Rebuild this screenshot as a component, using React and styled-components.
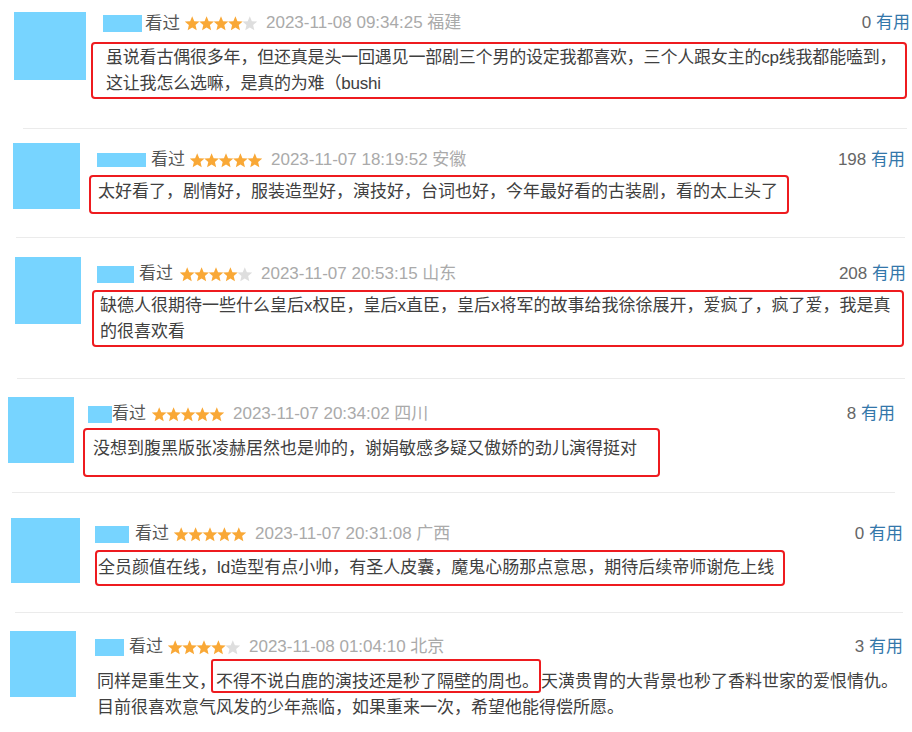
import React from 'react';
import styled, { createGlobalStyle } from 'styled-components';

const GlobalStyle = createGlobalStyle`
  html, body { margin: 0; padding: 0; background: #fff; }
  body { font-family: "Liberation Sans", "Noto Sans CJK SC", sans-serif; }
`;

const Page = styled.div`
  width: 912px;
  height: 732px;
  overflow: hidden;
  background: #fff;
`;

const Item = styled.div`
  display: flex;
  align-items: flex-start;
  box-sizing: border-box;
  height: ${({ $h }) => $h}px;
  padding-left: ${({ $x }) => $x}px;
  padding-right: ${({ $right }) => 912 - $right}px;
  font-size: ${({ $fs }) => $fs}px;
`;

const Avatar = styled.div`
  flex-shrink: 0;
  width: ${({ $w }) => $w}px;
  height: ${({ $h }) => $h}px;
  margin-top: ${({ $top }) => $top}px;
  background: #77d4ff;
`;

const Main = styled.div`
  flex: 1;
  min-width: 0;
  margin-left: ${({ $gap }) => $gap}px;
  padding-top: ${({ $top }) => $top}px;
`;

const Head = styled.div`
  display: flex;
  align-items: center;
  height: 26px;
  line-height: 26px;
  padding-left: ${({ $indent }) => $indent}px;
  white-space: nowrap;
`;

const NameBar = styled.span`
  width: ${({ $w }) => $w}px;
  height: ${({ $h }) => $h}px;
  margin-right: ${({ $gap }) => $gap}px;
  background: #77d4ff;
`;

const Watched = styled.span`
  color: #555;
`;

const StarRow = styled.svg`
  margin: 0 9px 0 ${({ $gap }) => $gap}px;
  flex-shrink: 0;
`;

const DateText = styled.span`
  color: #aaa;
  font-size: 17px;
`;

const Useful = styled.span`
  margin-left: auto;
  color: #666;
  font-size: 17px;
`;

const UsefulLink = styled.span`
  color: #3377aa;
`;

const Body = styled.div`
  margin-top: ${({ $top }) => $top}px;
  font-size: 17px;
  line-height: 26px;
  letter-spacing: ${({ $ls = 0 }) => $ls}px;
  color: #404040;
  white-space: nowrap;
  padding-left: ${({ $pl }) => $pl}px;
`;

const BoxedBody = styled(Body)`
  width: ${({ $w }) => $w}px;
  box-sizing: border-box;
  border: 2px solid #ee1b1f;
  border-radius: 4px;
  padding-top: ${({ $pt }) => $pt}px;
  padding-bottom: ${({ $pb }) => $pb}px;
`;

const Mark = styled.span`
  border: 2px solid #ee1b1f;
  border-radius: 3px;
  padding: 11px 0 0 3px;
  margin-left: -5px;
`;

const Divider = styled.div`
  height: 1px;
  background: #ebebeb;
  margin: 0 ${({ $r }) => 912 - $r}px 0 ${({ $l }) => $l}px;
`;

const starPoints = (cx, cy, R, r) => {
  const pts = [];
  for (let i = 0; i < 10; i++) {
    const a = -Math.PI / 2 + (i * Math.PI) / 5;
    const rad = i % 2 === 0 ? R : r;
    pts.push(`${(cx + rad * Math.cos(a)).toFixed(2)},${(cy + rad * Math.sin(a)).toFixed(2)}`);
  }
  return pts.join(' ');
};

const Stars = ({ count, gap }) => (
  <StarRow $gap={gap} width="72" height="15" viewBox="0 0 72 15">
    {[0, 1, 2, 3, 4].map((i) => (
      <polygon
        key={i}
        points={starPoints(i * 14.4 + 7.2, 8, 7.7, 3.5)}
        fill={i < count ? '#f9a836' : '#dedede'}
      />
    ))}
  </StarRow>
);

const reviews = [
  {
    h: 128, x: 14, avT: 12, avW: 72, avH: 68, cx: 91, right: 910, fs: 17.5,
    nameDx: 12, nameW: 39, nameH: 17, nameGap: 3, starGap: 5, headTop: 10,
    stars: 4, date: '2023-11-08 09:34:25 福建', useful: 0,
    bodyTop: 6, box: { w: 816, pt: 1, pb: 0 }, pl: 13, ls: -0.2,
    lines: [
      '虽说看古偶很多年，但还真是头一回遇见一部剧三个男的设定我都喜欢，三个人跟女主的cp线我都能嗑到，',
      '这让我怎么选嘛，是真的为难（bushi',
    ],
    divider: { l: 23, r: 907 },
  },
  {
    h: 108, x: 13, avT: 14, avW: 67, avH: 66, cx: 89, right: 905, fs: 17,
    nameDx: 8, nameW: 49, nameH: 14, nameGap: 5, starGap: 5, headTop: 18,
    stars: 5, date: '2023-11-07 18:19:52 安徽', useful: 198,
    bodyTop: 2, box: { w: 700, pt: 2, pb: 7 }, pl: 7,
    lines: ['太好看了，剧情好，服装造型好，演技好，台词也好，今年最好看的古装剧，看的太上头了'],
    divider: { l: 16, r: 905 },
  },
  {
    h: 140, x: 15, avT: 19, avW: 66, avH: 67, cx: 92, right: 906, fs: 17,
    nameDx: 5, nameW: 37, nameH: 17, nameGap: 5, starGap: 7, headTop: 23,
    stars: 4, date: '2023-11-07 20:53:15 山东', useful: 208,
    bodyTop: 3, box: { w: 812, pt: 1, pb: 0 }, pl: 6,
    lines: [
      '缺德人很期待一些什么皇后x权臣，皇后x直臣，皇后x将军的故事给我徐徐展开，爱疯了，疯了爱，我是真',
      '的很喜欢看',
    ],
    divider: { l: 17, r: 905 },
  },
  {
    h: 113, x: 8, avT: 18, avW: 66, avH: 66, cx: 83, right: 895, fs: 17,
    nameDx: 5, nameW: 24, nameH: 17, nameGap: 0, starGap: 6, headTop: 22,
    stars: 5, date: '2023-11-07 20:34:02 四川', useful: 8,
    bodyTop: 1, box: { w: 577, pt: 6, pb: 13 }, pl: 8,
    lines: ['没想到腹黑版张凌赫居然也是帅的，谢娟敏感多疑又傲娇的劲儿演得挺对'],
    divider: { l: 12, r: 895 },
  },
  {
    h: 119, x: 11, avT: 25, avW: 69, avH: 65, cx: 95, right: 903, fs: 17,
    nameDx: 0, nameW: 34, nameH: 17, nameGap: 6, starGap: 5, headTop: 28,
    stars: 5, date: '2023-11-07 20:31:08 广西', useful: 0,
    bodyTop: 3, box: { w: 690, pt: 3, pb: 3 }, pl: 1,
    lines: ['全员颜值在线，ld造型有点小帅，有圣人皮囊，魔鬼心肠那点意思，期待后续帝师谢危上线'],
    divider: { l: 15, r: 903 },
  },
  {
    h: 119, x: 10, avT: 18, avW: 66, avH: 66, cx: 95, right: 903, fs: 17,
    nameDx: 0, nameW: 29, nameH: 17, nameGap: 5, starGap: 5, headTop: 21,
    stars: 4, date: '2023-11-08 01:04:10 北京', useful: 3,
    bodyTop: 9, pl: 2,
    marked: {
      before: '同样是重生文，',
      mark: '不得不说白鹿的演技还是秒了隔壁的周也。',
      after: '天潢贵胄的大背景也秒了香料世家的爱恨情仇。',
      next: '目前很喜欢意气风发的少年燕临，如果重来一次，希望他能得偿所愿。',
    },
  },
];

const Lines = ({ lines }) =>
  lines.map((line, i) => (
    <React.Fragment key={i}>
      {i > 0 && <br />}
      {line}
    </React.Fragment>
  ));

const Review = ({ r }) => (
  <Item $h={r.h} $x={r.x} $right={r.right} $fs={r.fs}>
    <Avatar $w={r.avW} $h={r.avH} $top={r.avT} />
    <Main $gap={r.cx - r.x - r.avW} $top={r.headTop}>
      <Head $indent={r.nameDx}>
        <NameBar $w={r.nameW} $h={r.nameH} $gap={r.nameGap} />
        <Watched>看过</Watched>
        <Stars count={r.stars} gap={r.starGap} />
        <DateText>{r.date}</DateText>
        <Useful>
          {r.useful} <UsefulLink>有用</UsefulLink>
        </Useful>
      </Head>
      {r.box ? (
        <BoxedBody
          $top={r.bodyTop}
          $w={r.box.w}
          $pt={r.box.pt}
          $pb={r.box.pb}
          $pl={r.pl}
          $ls={r.ls}
        >
          <Lines lines={r.lines} />
        </BoxedBody>
      ) : (
        <Body $top={r.bodyTop} $pl={r.pl}>
          {r.marked.before}
          <Mark>{r.marked.mark}</Mark>
          {r.marked.after}
          <br />
          {r.marked.next}
        </Body>
      )}
    </Main>
  </Item>
);

const App = () => (
  <Page>
    <GlobalStyle />
    {reviews.map((r, i) => (
      <React.Fragment key={i}>
        <Review r={r} />
        {r.divider && <Divider $l={r.divider.l} $r={r.divider.r} />}
      </React.Fragment>
    ))}
  </Page>
);

export default App;
